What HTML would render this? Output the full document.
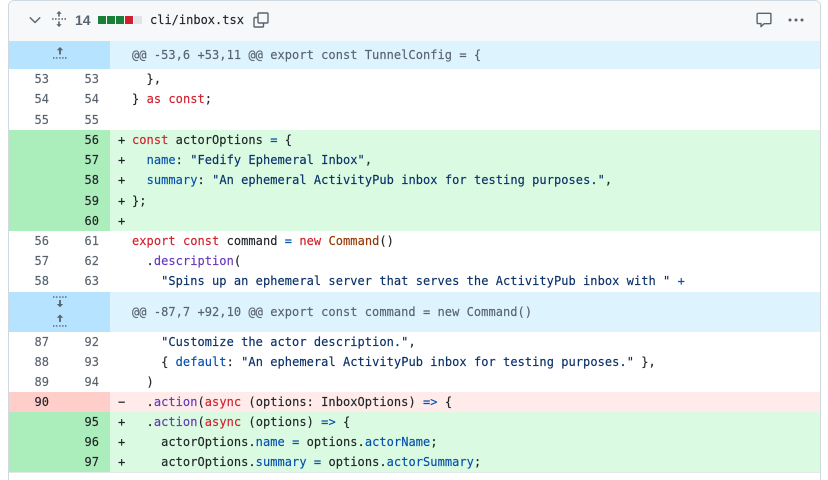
<!DOCTYPE html>
<html><head><meta charset="utf-8">
<style>
html,body{margin:0;padding:0;width:828px;height:480px;overflow:hidden;background:#fff}
*{box-sizing:border-box}
#card{position:absolute;left:8px;top:0;width:813px;height:500px;border:1px solid #d1d9e0;border-radius:6px 6px 0 0;overflow:hidden;background:#fff}
#head{position:absolute;left:0;top:0;width:811px;height:41px;background:#f6f8fa;border-bottom:1px solid #d1d9e0}
.abs{position:absolute}
#page{position:absolute;left:0;top:0;width:828px;height:480px;overflow:hidden}
.row{position:absolute;left:9px;width:811px;height:20.2px;font:12px/20px "DejaVu Sans Mono","Liberation Mono",monospace;letter-spacing:.05px;color:#1f2328;white-space:pre;-webkit-text-stroke:.15px currentColor}
.low{line-height:21px}
.g{position:absolute;left:0;top:0;width:101px;height:100%}
.c{position:absolute;left:101px;top:0;right:0;height:100%}
.n{position:absolute;top:0;width:20px;text-align:right;color:#59636e;letter-spacing:0}
.n1{left:20px}.n2{left:70px}
.t{position:absolute;left:123px;top:0}
.m{position:absolute;left:109px;top:0;color:#1f2328}
.add .g{background:#aceebb}.add .c{background:#dafbe1}.add .n{color:#1f2328}
.del .g{background:#ffcecb}.del .c{background:#ffebe9}.del .n{color:#1f2328}
.hunk{position:absolute;left:9px;width:811px}
.hunk .g{background:#b6e3ff}
.hunk .c{background:#ddf4ff}
.hunk .t{color:#59636e;font:12px/20px "DejaVu Sans Mono","Liberation Mono",monospace;letter-spacing:.05px;white-space:pre;-webkit-text-stroke:.15px currentColor}
.k{color:#cf222e}.s{color:#0a3069}.b{color:#0550ae}.f{color:#6639ba}.o{color:#953800}
svg{position:absolute;display:block}
</style></head><body>
<div id="page">
<div id="card"><div id="head"></div></div>

<svg style="left:27px;top:12px" width="16" height="16" viewBox="0 0 16 16"><path d="M3.2 5.7 8 10.5l4.8-4.800" fill="none" stroke="#59636e" stroke-width="1.4" stroke-linecap="round" stroke-linejoin="round"/></svg>
<svg style="left:51px;top:11px" width="16" height="16" viewBox="0 0 16 16" fill="#59636e"><path d="M8 0 5.300 2.800h1.900V5.600h1.600V2.800h1.900zM8 16l-2.700-2.800h1.900v-2.800h1.600v2.800h1.900z"/><path d="M1 7.300h1.600v1.400H1zM4 7.300h1.600v1.400H4zM7.200 7.300h1.600v1.400H7.200zM10.400 7.300H12v1.400h-1.600zM13.400 7.300H15v1.400h-1.600z"/></svg>
<div class="abs" style="left:75px;top:11px;font:700 14px/18px 'Liberation Sans',sans-serif;color:#59636e;letter-spacing:0">14</div>
<div class="abs" style="left:98px;top:16px;width:8px;height:8px;background:#1a7f37"></div>
<div class="abs" style="left:107px;top:16px;width:8px;height:8px;background:#1a7f37"></div>
<div class="abs" style="left:116px;top:16px;width:8px;height:8px;background:#1a7f37"></div>
<div class="abs" style="left:125px;top:16px;width:8px;height:8px;background:#cf222e"></div>
<div class="abs" style="left:134px;top:16px;width:8px;height:8px;background:#e1e5ea"></div>
<div class="abs" style="left:150px;top:11px;font:12px/18px 'DejaVu Sans Mono',monospace;color:#1f2328;white-space:pre;letter-spacing:0;-webkit-text-stroke:.15px currentColor">cli/inbox.tsx</div>
<svg style="left:253px;top:12px" width="16" height="16" viewBox="0 0 16 16" fill="none" stroke="#59636e" stroke-width="1.4"><path d="M4 5.500H1.900c-.5 0-.9.4-.9.9v7.700c0 .5.4.9.9.9h7.700c.5 0 .9-.4.9-.9V12" stroke-linecap="round"/><rect x="5" y="1" width="10" height="10" rx="1"/></svg>
<svg style="left:756px;top:12px" width="16" height="16" viewBox="0 0 16 16" fill="none" stroke="#59636e" stroke-width="1.4" stroke-linejoin="round"><path d="M2 1.300h12c.5 0 .9.4.9.9v8.600c0 .5-.4.9-.9.9H8.200L5 14.600v-3H2c-.5 0-.9-.4-.9-.9V2.200c0-.5.4-.9.9-.9z"/></svg>
<svg style="left:788px;top:12px" width="16" height="16" viewBox="0 0 16 16" fill="#59636e"><circle cx="2" cy="8" r="1.500"/><circle cx="8" cy="8" r="1.500"/><circle cx="14" cy="8" r="1.500"/></svg>

<div class="hunk" style="top:41px;height:28px"><div class="g"></div><div class="c"></div><div class="t" style="left:123px;top:4px">@@ -53,6 +53,11 @@ export const TunnelConfig = {</div></div>
<svg style="left:52px;top:47px" width="16" height="13" viewBox="0 0 16 13" fill="#59636e"><path d="M8 0 4.800 3.200h2.300V7.500h1.800V3.200h2.300z"/><path d="M1 10.300h1.500v1.300H1zM3.900 10.300h1.500v1.300H3.900zM7.200 10.300h1.500v1.300H7.200zM10.100 10.300h1.500v1.300h-1.500zM13 10.300h1.500v1.300H13z"/></svg>

<div class="row" style="top:69px"><span class="n n1">53</span><span class="n n2">53</span><span class="t">  },</span></div>
<div class="row" style="top:89.300px"><span class="n n1">54</span><span class="n n2">54</span><span class="t">} <span class="k">as</span> <span class="k">const</span>;</span></div>
<div class="row" style="top:109.500px"><span class="n n1">55</span><span class="n n2">55</span></div>

<div class="row add" style="top:130px"><div class="g"></div><div class="c"></div><span class="n n2">56</span><span class="m">+</span><span class="t"><span class="k">const</span> actorOptions <span class="b">=</span> {</span></div>
<div class="row add" style="top:150.200px"><div class="g"></div><div class="c"></div><span class="n n2">57</span><span class="m">+</span><span class="t">  <span class="b">name</span>: <span class="s">"Fedify Ephemeral Inbox"</span>,</span></div>
<div class="row add" style="top:170.400px"><div class="g"></div><div class="c"></div><span class="n n2">58</span><span class="m">+</span><span class="t">  <span class="b">summary</span>: <span class="s">"An ephemeral ActivityPub inbox for testing purposes."</span>,</span></div>
<div class="row add" style="top:190.600px"><div class="g"></div><div class="c"></div><span class="n n2">59</span><span class="m">+</span><span class="t">};</span></div>
<div class="row add" style="top:210.800px"><div class="g"></div><div class="c"></div><span class="n n2">60</span><span class="m">+</span></div>

<div class="row" style="top:231px"><span class="n n1">56</span><span class="n n2">61</span><span class="t"><span class="k">export</span> <span class="k">const</span> command <span class="b">=</span> <span class="k">new</span> <span class="o">Command</span>()</span></div>
<div class="row" style="top:251.200px"><span class="n n1">57</span><span class="n n2">62</span><span class="t">  .<span class="f">description</span>(</span></div>
<div class="row" style="top:271.400px"><span class="n n1">58</span><span class="n n2">63</span><span class="t">    <span class="s">"Spins up an ephemeral server that serves the ActivityPub inbox with "</span> <span class="b">+</span></span></div>

<div class="hunk" style="top:292px;height:40px"><div class="g"></div><div class="c"></div><div class="t" style="left:123px;top:10px">@@ -87,7 +92,10 @@ export const command = new Command()</div></div>
<svg style="left:52px;top:295px" width="16" height="34" viewBox="0 0 16 34" fill="#59636e"><path d="M1 1.400h1.500v1.300H1zM3.900 1.400h1.500v1.300H3.900zM7.200 1.400h1.500v1.300H7.200zM10.100 1.400h1.500v1.300h-1.500zM13 1.400h1.500v1.300H13z"/><path d="M7.100 5v4h-2.300L8 12.300 11.200 9H8.900V5z"/><path d="M8 19.500 4.800 22.700h2.300V27h1.800v-4.300h2.300z"/><path d="M1 30.300h1.500v1.300H1zM3.900 30.300h1.500v1.300H3.900zM7.200 30.300h1.500v1.300H7.200zM10.100 30.300h1.500v1.300h-1.500zM13 30.300h1.500v1.300H13z"/></svg>

<div class="row" style="top:331.700px"><span class="n n1">87</span><span class="n n2">92</span><span class="t">    <span class="s">"Customize the actor description."</span>,</span></div>
<div class="row" style="top:351.800px"><span class="n n1">88</span><span class="n n2">93</span><span class="t">    { <span class="b">default</span>: <span class="s">"An ephemeral ActivityPub inbox for testing purposes."</span> },</span></div>
<div class="row" style="top:372px"><span class="n n1">89</span><span class="n n2">94</span><span class="t">  )</span></div>

<div class="row del low" style="top:392px"><div class="g"></div><div class="c"></div><span class="n n1">90</span><span class="m">−</span><span class="t">  .<span class="f">action</span>(<span class="k">async</span> (options: InboxOptions) <span class="b">=&gt;</span> {</span></div>
<div class="row add low" style="top:412px"><div class="g"></div><div class="c"></div><span class="n n2">95</span><span class="m">+</span><span class="t">  .<span class="f">action</span>(<span class="k">async</span> (options) <span class="b">=&gt;</span> {</span></div>
<div class="row add low" style="top:432px"><div class="g"></div><div class="c"></div><span class="n n2">96</span><span class="m">+</span><span class="t">    actorOptions.<span class="b">name</span> <span class="b">=</span> options.<span class="b">actorName</span>;</span></div>
<div class="row add low" style="top:452px"><div class="g"></div><div class="c"></div><span class="n n2">97</span><span class="m">+</span><span class="t">    actorOptions.<span class="b">summary</span> <span class="b">=</span> options.<span class="b">actorSummary</span>;</span></div>
<div class="abs" style="left:9px;top:472px;width:811px;height:1px;background:#e4e8ea"></div>
</div>
</body></html>
